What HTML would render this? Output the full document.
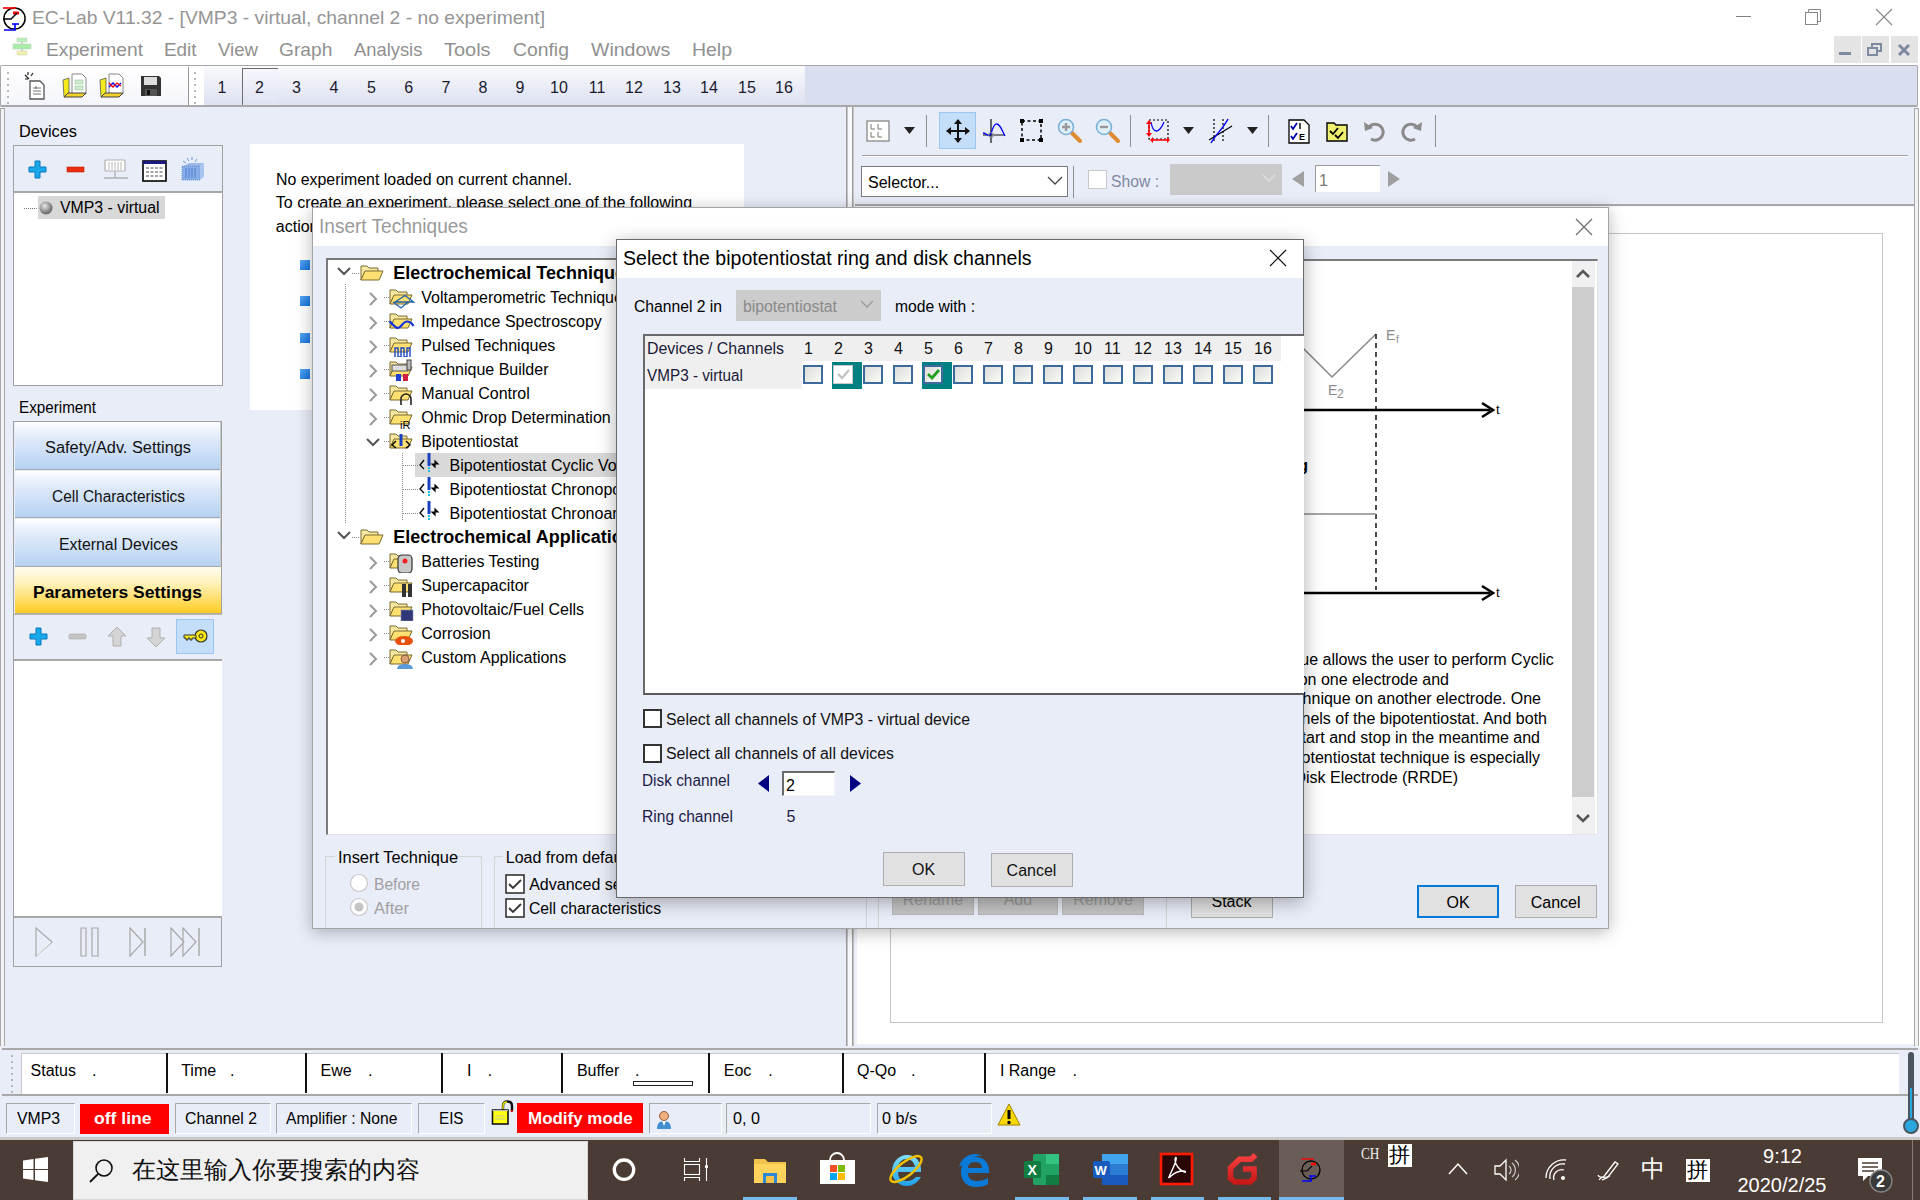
<!DOCTYPE html><html><head><meta charset="utf-8"><style>
html,body{margin:0;padding:0;}
body{width:1920px;height:1200px;overflow:hidden;position:relative;background:#E9EDF8;font-family:"Liberation Sans",sans-serif;}
.a{position:absolute;box-sizing:border-box;}
.t{white-space:nowrap;}
</style></head><body>
<div class="a" style="left:0px;top:0px;width:1920px;height:65px;background:#fff;"></div>
<svg class="a" style="left:1px;top:3px;" width="26" height="28" viewBox="0 0 26 28"><circle cx="13.5" cy="15.5" r="10.6" fill="none" stroke="#000" stroke-width="1.5"/><path d="M2 5h13" stroke="#f00" stroke-width="1.6"/><path d="M12 10h6" stroke="#f00" stroke-width="3"/><path d="M2 16h8l6-6" stroke="#000" stroke-width="1.4" fill="none"/><path d="M11 21h7" stroke="#00f" stroke-width="1.6"/><path d="M14 21v6M3 27h12" stroke="#00f" stroke-width="1.6"/></svg>
<div class="a t" style="left:32.00px;top:8.00px;font-size:19px;line-height:19px;color:#959595;transform:scaleX(1.0148);transform-origin:0 0;">EC-Lab V11.32 - [VMP3 - virtual, channel 2 - no experiment]</div>
<div class="a" style="left:1736px;top:16px;width:15px;height:1px;background:#808080;"></div>
<svg class="a" style="left:1803px;top:7px;" width="20" height="20" viewBox="0 0 20 20"><rect x="2.5" y="5.5" width="12" height="12" fill="none" stroke="#888" stroke-width="1"/><path d="M5.5 5.5v-3h12v12h-3" fill="none" stroke="#888" stroke-width="1"/></svg>
<svg class="a" style="left:1874px;top:7px;" width="20" height="20" viewBox="0 0 20 20"><path d="M2 2l16 16M18 2L2 18" stroke="#888" stroke-width="1.1"/></svg>
<svg class="a" style="left:12px;top:37px;" width="20" height="20" viewBox="0 0 20 20"><rect x="5" y="1" width="10" height="4" fill="#b7f0b7" stroke="#c8d8c8" stroke-width=".6"/><rect x="1" y="7" width="18" height="5" fill="#a8eca8" stroke="#c0d0c0" stroke-width=".6"/><rect x="5" y="14" width="10" height="4" fill="#eef0a8" stroke="#d8d8c0" stroke-width=".6"/><path d="M10 5v2M10 12v2" stroke="#aaa"/></svg>
<div class="a t" style="left:45.80px;top:41.00px;font-size:18.5px;line-height:18.5px;color:#909090;transform:scaleX(1.0367);transform-origin:0 0;">Experiment</div>
<div class="a t" style="left:164.20px;top:41.00px;font-size:18.5px;line-height:18.5px;color:#909090;transform:scaleX(1.0195);transform-origin:0 0;">Edit</div>
<div class="a t" style="left:218.30px;top:41.00px;font-size:18.5px;line-height:18.5px;color:#909090;transform:scaleX(1.0059);transform-origin:0 0;">View</div>
<div class="a t" style="left:279.20px;top:41.00px;font-size:18.5px;line-height:18.5px;color:#909090;transform:scaleX(1.0366);transform-origin:0 0;">Graph</div>
<div class="a t" style="left:354.20px;top:41.00px;font-size:18.5px;line-height:18.5px;color:#909090;transform:scaleX(0.9915);transform-origin:0 0;">Analysis</div>
<div class="a t" style="left:444.20px;top:41.00px;font-size:18.5px;line-height:18.5px;color:#909090;transform:scaleX(1.0790);transform-origin:0 0;">Tools</div>
<div class="a t" style="left:513.30px;top:41.00px;font-size:18.5px;line-height:18.5px;color:#909090;transform:scaleX(1.0453);transform-origin:0 0;">Config</div>
<div class="a t" style="left:590.80px;top:41.00px;font-size:18.5px;line-height:18.5px;color:#909090;transform:scaleX(1.0553);transform-origin:0 0;">Windows</div>
<div class="a t" style="left:691.70px;top:41.00px;font-size:18.5px;line-height:18.5px;color:#909090;transform:scaleX(1.0513);transform-origin:0 0;">Help</div>
<div class="a" style="left:1834px;top:36px;width:27px;height:27px;background:#e4e4e4;"></div>
<div class="a" style="left:1862px;top:36px;width:27px;height:27px;background:#e4e4e4;"></div>
<div class="a" style="left:1891px;top:36px;width:27px;height:27px;background:#e4e4e4;"></div>
<div class="a" style="left:1839px;top:52px;width:12px;height:3px;background:#7d8aa0;"></div>
<svg class="a" style="left:1866px;top:41px;" width="20" height="20" viewBox="0 0 20 20"><rect x="2" y="7" width="9" height="7" fill="none" stroke="#7d8aa0" stroke-width="2"/><path d="M6 7V3h9v7h-4" fill="none" stroke="#7d8aa0" stroke-width="2"/></svg>
<svg class="a" style="left:1895px;top:41px;" width="20" height="20" viewBox="0 0 20 20"><path d="M4 4l10 10M14 4L4 14" stroke="#7d8aa0" stroke-width="3"/></svg>
<div class="a" style="left:0px;top:65px;width:1918px;height:42px;background:#dadff0;border-top:1px solid #a8a8a8;border-bottom:2px solid #a8a8a8;border-right:1px solid #a8a8a8;border-left:1px solid #a8a8a8;border-radius:2px;"></div>
<div class="a" style="left:1918px;top:65px;width:2px;height:1040px;background:#fff;"></div>
<div class="a" style="left:1px;top:66px;width:187px;height:39px;background:linear-gradient(#fff,#f4f5fb);"></div>
<div class="a" style="left:188px;top:67px;width:1px;height:38px;background:#9a9a9a;"></div>
<div class="a" style="left:204px;top:66px;width:601px;height:39px;background:linear-gradient(#f9fafd,#dde1f1);"></div>
<div class="a" style="left:189px;top:66px;width:15px;height:39px;background:#fff;"></div>
<div class="a" style="left:194px;top:72px;width:2px;height:2px;background:#b8b8b8;"></div>
<div class="a" style="left:7px;top:72px;width:2px;height:2px;background:#b8b8b8;"></div>
<div class="a" style="left:194px;top:78px;width:2px;height:2px;background:#b8b8b8;"></div>
<div class="a" style="left:7px;top:78px;width:2px;height:2px;background:#b8b8b8;"></div>
<div class="a" style="left:194px;top:84px;width:2px;height:2px;background:#b8b8b8;"></div>
<div class="a" style="left:7px;top:84px;width:2px;height:2px;background:#b8b8b8;"></div>
<div class="a" style="left:194px;top:90px;width:2px;height:2px;background:#b8b8b8;"></div>
<div class="a" style="left:7px;top:90px;width:2px;height:2px;background:#b8b8b8;"></div>
<div class="a" style="left:194px;top:96px;width:2px;height:2px;background:#b8b8b8;"></div>
<div class="a" style="left:7px;top:96px;width:2px;height:2px;background:#b8b8b8;"></div>
<div class="a" style="left:194px;top:102px;width:2px;height:2px;background:#b8b8b8;"></div>
<div class="a" style="left:7px;top:102px;width:2px;height:2px;background:#b8b8b8;"></div>
<div class="a" style="left:242px;top:68px;width:36px;height:37px;border-top:1px solid #6d6d6d;border-left:1px solid #6d6d6d;background:linear-gradient(#f6f7fc,#dfe3f2);"></div>
<div class="a t" style="left:217.55px;top:80.00px;font-size:16px;line-height:16px;color:#1a1a2e;">1</div>
<div class="a t" style="left:254.95px;top:80.00px;font-size:16px;line-height:16px;color:#1a1a2e;">2</div>
<div class="a t" style="left:292.05px;top:80.00px;font-size:16px;line-height:16px;color:#1a1a2e;">3</div>
<div class="a t" style="left:329.55px;top:80.00px;font-size:16px;line-height:16px;color:#1a1a2e;">4</div>
<div class="a t" style="left:367.05px;top:80.00px;font-size:16px;line-height:16px;color:#1a1a2e;">5</div>
<div class="a t" style="left:404.15px;top:80.00px;font-size:16px;line-height:16px;color:#1a1a2e;">6</div>
<div class="a t" style="left:441.55px;top:80.00px;font-size:16px;line-height:16px;color:#1a1a2e;">7</div>
<div class="a t" style="left:478.55px;top:80.00px;font-size:16px;line-height:16px;color:#1a1a2e;">8</div>
<div class="a t" style="left:515.55px;top:80.00px;font-size:16px;line-height:16px;color:#1a1a2e;">9</div>
<div class="a t" style="left:550.10px;top:80.00px;font-size:16px;line-height:16px;color:#1a1a2e;">10</div>
<div class="a t" style="left:588.70px;top:80.00px;font-size:16px;line-height:16px;color:#1a1a2e;">11</div>
<div class="a t" style="left:625.10px;top:80.00px;font-size:16px;line-height:16px;color:#1a1a2e;">12</div>
<div class="a t" style="left:663.10px;top:80.00px;font-size:16px;line-height:16px;color:#1a1a2e;">13</div>
<div class="a t" style="left:700.10px;top:80.00px;font-size:16px;line-height:16px;color:#1a1a2e;">14</div>
<div class="a t" style="left:738.10px;top:80.00px;font-size:16px;line-height:16px;color:#1a1a2e;">15</div>
<div class="a t" style="left:775.10px;top:80.00px;font-size:16px;line-height:16px;color:#1a1a2e;">16</div>
<svg class="a" style="left:24px;top:72px;" width="24" height="28" viewBox="0 0 24 28"><path d="M6 9h10l4 4v14H6z" fill="#fff" stroke="#555" stroke-width="1.3"/><path d="M9 16h8M9 19h8M9 22h8M12 14v3" stroke="#777" stroke-width="1.2"/><path d="M1 3l4 4M4 0v3M9 1l-2 3M1 7h3" stroke="#222" stroke-width="1.2"/></svg>
<svg class="a" style="left:62px;top:72px;" width="26" height="28" viewBox="0 0 26 28"><path d="M10 2h10l4 4v16H10z" fill="#fff" stroke="#888" stroke-width="1"/><rect x="13" y="8" width="8" height="4" fill="#cfe8cf" stroke="#9c9" stroke-width=".6"/><rect x="13" y="14" width="8" height="4" fill="#cfe8cf" stroke="#9c9" stroke-width=".6"/><path d="M1 8l6-2v16l-5 3z" fill="#f5ea1c" stroke="#555" stroke-width=".8"/><path d="M2 25l4-4h18l-4 4z" fill="#f0d22a" stroke="#444" stroke-width="1"/></svg>
<svg class="a" style="left:99px;top:72px;" width="26" height="28" viewBox="0 0 26 28"><path d="M10 2h10l4 4v16H10z" fill="#fff" stroke="#888" stroke-width="1"/><path d="M10 15l4-4 4 4 4-4" fill="none" stroke="#00f" stroke-width="1.3"/><path d="M10 11l4 4 4-4 4 3" fill="none" stroke="#f00" stroke-width="1.3"/><path d="M1 8l6-2v16l-5 3z" fill="#f5ea1c" stroke="#555" stroke-width=".8"/><path d="M2 25l4-4h18l-4 4z" fill="#f0d22a" stroke="#444" stroke-width="1"/></svg>
<svg class="a" style="left:139px;top:74px;" width="24" height="24" viewBox="0 0 24 24"><path d="M2 2h18l2 2v18H2z" fill="#333"/><rect x="5" y="3" width="13" height="8" fill="#ddd"/><rect x="6" y="15" width="12" height="7" fill="#555"/><rect x="8" y="16" width="3" height="5" fill="#111"/></svg>
<div class="a" style="left:0px;top:108px;width:5px;height:938px;background:#f2f2f2;border-left:1px solid #a8a8a8;border-right:1px solid #a8a8a8;border-top:1px solid #a8a8a8;"></div>
<div class="a" style="left:1914px;top:108px;width:5px;height:938px;background:#f2f2f2;border-left:1px solid #a8a8a8;border-right:1px solid #a8a8a8;border-top:1px solid #a8a8a8;"></div>
<div class="a" style="left:846px;top:107px;width:2px;height:939px;background:#9c9c9c;border-right:1px solid #c4c4c4;"></div>
<div class="a" style="left:848px;top:107px;width:4px;height:939px;background:#f8f9fd;"></div>
<div class="a" style="left:852px;top:107px;width:2px;height:939px;background:#9c9c9c;border-right:1px solid #c4c4c4;"></div>
<div class="a t" style="left:19.00px;top:124.00px;font-size:16px;line-height:16px;color:#000;transform:scaleX(1.0192);transform-origin:0 0;">Devices</div>
<div class="a" style="left:13px;top:145px;width:210px;height:241px;border:1px solid #a0a0a0;background:#e9edf8;"></div>
<div class="a" style="left:14px;top:191px;width:208px;height:2px;background:#a8a8a8;"></div>
<div class="a" style="left:14px;top:193px;width:208px;height:192px;background:#fff;"></div>
<svg class="a" style="left:28px;top:160px;" width="20" height="20" viewBox="0 0 20 20"><path d="M7 1h5v6h6v5h-6v6H7v-6H1V7h6z" fill="#19a8e8" stroke="#0a78c0" stroke-width="1"/></svg>
<svg class="a" style="left:66px;top:160px;" width="20" height="20" viewBox="0 0 20 20"><rect x="1" y="7" width="17" height="5" fill="#e83010" stroke="#c02000" stroke-width=".6"/></svg>
<svg class="a" style="left:103px;top:159px;" width="25" height="24" viewBox="0 0 25 24"><rect x="2" y="1" width="20" height="11" rx="1" fill="#fff" stroke="#b0b0b0" stroke-width="1.2"/><path d="M6 3v8M9 3v8M12 3v8M15 3v8M18 3v8" stroke="#b8b8b8"/><path d="M12 12v7M1 19h24" stroke="#b0b0b0" stroke-width="1.3"/></svg>
<svg class="a" style="left:142px;top:160px;" width="25" height="22" viewBox="0 0 25 22"><rect x="1" y="1" width="23" height="20" fill="#fff" stroke="#000" stroke-width="1.6"/><rect x="1" y="1" width="23" height="3" fill="#1a1a80"/><path d="M4 8h17M4 12h17M4 16h17" stroke="#888" stroke-width="1.4" stroke-dasharray="3 1.5"/></svg>
<svg class="a" style="left:180px;top:157px;" width="26" height="26" viewBox="0 0 26 26"><path d="M4 9l5-3h15l-4 3z" fill="#9ab8e8"/><rect x="2" y="9" width="18" height="14" fill="#88aee8" stroke="#6a90d0" stroke-width="1" stroke-dasharray="1 1"/><path d="M20 9l4-3v14l-4 3z" fill="#a8c4f0"/><path d="M6 11v10M9 11v10M12 11v10M15 11v10" stroke="#5080d0" stroke-width="1"/><path d="M7 1l2 3M12 0v3M3 4l3 2M17 2l-2 3" stroke="#6a9ae0" stroke-width="1"/></svg>
<div class="a" style="left:24px;top:208px;width:1px;height:1px;background:#777;"></div>
<div class="a" style="left:26px;top:208px;width:1px;height:1px;background:#777;"></div>
<div class="a" style="left:28px;top:208px;width:1px;height:1px;background:#777;"></div>
<div class="a" style="left:30px;top:208px;width:1px;height:1px;background:#777;"></div>
<div class="a" style="left:32px;top:208px;width:1px;height:1px;background:#777;"></div>
<div class="a" style="left:34px;top:208px;width:1px;height:1px;background:#777;"></div>
<div class="a" style="left:36px;top:208px;width:1px;height:1px;background:#777;"></div>
<div class="a" style="left:38px;top:196px;width:127px;height:23px;background:#d8d8d8;"></div>
<svg class="a" style="left:38px;top:200px;" width="16" height="16" viewBox="0 0 16 16"><defs><radialGradient id="gb" cx="40%" cy="35%" r="60%"><stop offset="0" stop-color="#e8e8e8"/><stop offset="1" stop-color="#6a6a6a"/></radialGradient></defs><circle cx="8" cy="8" r="6.5" fill="url(#gb)"/></svg>
<div class="a t" style="left:60.30px;top:200.00px;font-size:16px;line-height:16px;color:#000;transform:scaleX(0.9904);transform-origin:0 0;">VMP3 - virtual</div>
<div class="a t" style="left:19.00px;top:400.00px;font-size:16px;line-height:16px;color:#000;transform:scaleX(0.9515);transform-origin:0 0;">Experiment</div>
<div class="a" style="left:13px;top:421px;width:209px;height:546px;border:1px solid #a0a0a0;background:#e9edf8;"></div>
<div class="a" style="left:15px;top:422px;width:206px;height:48px;background:linear-gradient(#fdfeff 0%,#dfeafa 35%,#b6d2f2 100%);border-bottom:1px solid #a8a8a8;border-right:1px solid #c8c8c8;"></div>
<div class="a t" style="left:45.00px;top:440.00px;font-size:16px;line-height:16px;color:#111;transform:scaleX(1.0218);transform-origin:0 0;">Safety/Adv. Settings</div>
<div class="a" style="left:15px;top:471px;width:206px;height:47px;background:linear-gradient(#fdfeff 0%,#dfeafa 35%,#b6d2f2 100%);border-bottom:1px solid #a8a8a8;border-right:1px solid #c8c8c8;"></div>
<div class="a t" style="left:51.50px;top:489.00px;font-size:16px;line-height:16px;color:#111;transform:scaleX(0.9651);transform-origin:0 0;">Cell Characteristics</div>
<div class="a" style="left:15px;top:519px;width:206px;height:48px;background:linear-gradient(#fdfeff 0%,#dfeafa 35%,#b6d2f2 100%);border-bottom:1px solid #a8a8a8;border-right:1px solid #c8c8c8;"></div>
<div class="a t" style="left:58.50px;top:537.00px;font-size:16px;line-height:16px;color:#111;transform:scaleX(0.9913);transform-origin:0 0;">External Devices</div>
<div class="a" style="left:15px;top:567px;width:206px;height:47px;background:linear-gradient(#fffdf0 0%,#ffefb0 40%,#ffcc22 100%);border-bottom:1px solid #a8a8a8;"></div>
<div class="a t" style="left:32.50px;top:585.00px;font-size:16px;line-height:16px;color:#000;font-weight:bold;transform:scaleX(1.0922);transform-origin:0 0;">Parameters Settings</div>
<div class="a" style="left:14px;top:614px;width:208px;height:46px;background:#e9edf8;border-top:1px solid #b8b8b8;"></div>
<div class="a" style="left:14px;top:659px;width:208px;height:2px;background:#a8a8a8;"></div>
<div class="a" style="left:14px;top:661px;width:208px;height:255px;background:#fff;"></div>
<div class="a" style="left:14px;top:916px;width:208px;height:2px;background:#a8a8a8;"></div>
<svg class="a" style="left:29px;top:627px;" width="20" height="20" viewBox="0 0 20 20"><path d="M7 1h5v6h6v5h-6v6H7v-6H1V7h6z" fill="#19a8e8" stroke="#0a78c0" stroke-width="1"/></svg>
<svg class="a" style="left:68px;top:630px;" width="20" height="14" viewBox="0 0 20 14"><rect x="1" y="4" width="17" height="5" rx="1.5" fill="#c4c4c4" stroke="#a8a8a8" stroke-width=".6"/></svg>
<svg class="a" style="left:106px;top:626px;" width="22" height="22" viewBox="0 0 22 22"><path d="M11 1l9 9h-5v10H7V10H2z" fill="#d4d4d4" stroke="#b0b0b0" stroke-width="1"/></svg>
<svg class="a" style="left:145px;top:626px;" width="22" height="22" viewBox="0 0 22 22"><path d="M11 21l9-9h-5V2H7v10H2z" fill="#d4d4d4" stroke="#b0b0b0" stroke-width="1"/></svg>
<div class="a" style="left:176px;top:619px;width:38px;height:35px;background:#c4ddf8;border:1px solid #9cc6f2;"></div>
<svg class="a" style="left:183px;top:628px;" width="26" height="16" viewBox="0 0 26 16"><circle cx="18" cy="8" r="6" fill="#f8e818" stroke="#333" stroke-width="1.2"/><circle cx="18" cy="8" r="2" fill="none" stroke="#333" stroke-width="1"/><path d="M1 7h12v3H9v2H7v-2H5v2H3v-2H1z" fill="#f8e818" stroke="#333" stroke-width="1"/></svg>
<svg class="a" style="left:34px;top:926px;" width="22" height="32" viewBox="0 0 22 32"><path d="M2 2l16 14L2 30z" fill="none" stroke="#a8a8a8" stroke-width="1.2"/><path d="M3 29l14-13" stroke="#fff"/></svg>
<svg class="a" style="left:78px;top:926px;" width="26" height="32" viewBox="0 0 26 32"><path d="M3 2h5v28H3zM14 2h6v28h-6z" fill="none" stroke="#a8a8a8" stroke-width="1.2"/></svg>
<svg class="a" style="left:128px;top:926px;" width="24" height="32" viewBox="0 0 24 32"><path d="M2 2l13 14L2 30z" fill="none" stroke="#a8a8a8" stroke-width="1.2"/><path d="M17 2v28" stroke="#a8a8a8" stroke-width="1.5"/></svg>
<svg class="a" style="left:169px;top:926px;" width="36" height="32" viewBox="0 0 36 32"><path d="M2 2l13 14L2 30zM14 2l13 14-13 14z" fill="none" stroke="#a8a8a8" stroke-width="1.2"/><path d="M30 2v28" stroke="#a8a8a8" stroke-width="1.5"/></svg>
<div class="a" style="left:250px;top:144px;width:494px;height:266px;background:#fff;"></div>
<div class="a t" style="left:275.80px;top:172.00px;font-size:16px;line-height:16px;color:#000;transform:scaleX(0.9934);transform-origin:0 0;">No experiment loaded on current channel.</div>
<div class="a t" style="left:275.80px;top:195.00px;font-size:16px;line-height:16px;color:#000;">To create an experiment, please select one of the following</div>
<div class="a t" style="left:275.80px;top:219.00px;font-size:16px;line-height:16px;color:#000;">actions:</div>
<div class="a" style="left:300px;top:260px;width:10px;height:10px;background:linear-gradient(135deg,#5aa8f8,#1070d8);"></div>
<div class="a" style="left:300px;top:296px;width:10px;height:10px;background:linear-gradient(135deg,#5aa8f8,#1070d8);"></div>
<div class="a" style="left:300px;top:333px;width:10px;height:10px;background:linear-gradient(135deg,#5aa8f8,#1070d8);"></div>
<div class="a" style="left:300px;top:369px;width:10px;height:10px;background:linear-gradient(135deg,#5aa8f8,#1070d8);"></div>
<div class="a" style="left:855px;top:107px;width:1059px;height:99px;background:#e9edf8;"></div>
<div class="a" style="left:862px;top:155px;width:1046px;height:1px;background:#a0a0a0;"></div>
<div class="a" style="left:862px;top:156px;width:1046px;height:1px;background:#fff;"></div>
<div class="a" style="left:855px;top:204px;width:1059px;height:2px;background:#a8a8a8;"></div>
<div class="a" style="left:855px;top:206px;width:1059px;height:1px;background:#f4f6fc;"></div>
<svg class="a" style="left:866px;top:120px;" width="24" height="22" viewBox="0 0 24 22"><rect x="1" y="1" width="22" height="20" fill="#fff" stroke="#888" stroke-width="1.3"/><path d="M5 4v5h4M12 4v5h4M5 12v5h4M12 12v5h4" fill="none" stroke="#777" stroke-width="1"/></svg>
<svg class="a" style="left:904px;top:127px;" width="12" height="8" viewBox="0 0 12 8"><path d="M0 0h11L5.5 7z" fill="#222"/></svg>
<svg class="a" style="left:1183px;top:127px;" width="12" height="8" viewBox="0 0 12 8"><path d="M0 0h11L5.5 7z" fill="#222"/></svg>
<svg class="a" style="left:1247px;top:127px;" width="12" height="8" viewBox="0 0 12 8"><path d="M0 0h11L5.5 7z" fill="#222"/></svg>
<div class="a" style="left:926px;top:115px;width:1px;height:32px;background:#909090;"></div>
<div class="a" style="left:1130px;top:115px;width:1px;height:32px;background:#909090;"></div>
<div class="a" style="left:1268px;top:115px;width:1px;height:32px;background:#909090;"></div>
<div class="a" style="left:1435px;top:115px;width:1px;height:32px;background:#909090;"></div>
<div class="a" style="left:939px;top:112px;width:37px;height:37px;background:#c4ddf8;border:1px solid #9cc6f2;"></div>
<svg class="a" style="left:946px;top:119px;" width="24" height="24" viewBox="0 0 24 24"><path d="M12 1v22M1 12h22" stroke="#111" stroke-width="2"/><path d="M12 0l-4 5h8zM12 24l-4-5h8zM0 12l5-4v8zM24 12l-5-4v8z" fill="#111"/></svg>
<svg class="a" style="left:982px;top:118px;" width="26" height="26" viewBox="0 0 26 26"><path d="M9 1v24M1 17h22" stroke="#111" stroke-width="1.2"/><path d="M1 15c4 0 5 4 7 2s3-12 7-11 6 9 8 12" fill="none" stroke="#00f" stroke-width="1.3"/><circle cx="9" cy="17" r="2.5" fill="none" stroke="#888"/></svg>
<svg class="a" style="left:1019px;top:118px;" width="26" height="26" viewBox="0 0 26 26"><rect x="3" y="3" width="19" height="19" fill="none" stroke="#000" stroke-width="1.5" stroke-dasharray="3 2.5"/><rect x="1" y="1" width="4" height="4"/><rect x="20" y="1" width="4" height="4"/><rect x="1" y="20" width="4" height="4"/><rect x="20" y="20" width="4" height="4"/></svg>
<svg class="a" style="left:1057px;top:118px;" width="26" height="26" viewBox="0 0 26 26"><line x1="14" y1="14" x2="23" y2="23" stroke="#e08a30" stroke-width="4" stroke-linecap="round"/><circle cx="9" cy="9" r="7.5" fill="#dff0fb" stroke="#7ab0d8" stroke-width="1.6"/><path d="M9 5v8M5 9h8" stroke="#999" stroke-width="2.4"/></svg>
<svg class="a" style="left:1095px;top:118px;" width="26" height="26" viewBox="0 0 26 26"><line x1="14" y1="14" x2="23" y2="23" stroke="#e08a30" stroke-width="4" stroke-linecap="round"/><circle cx="9" cy="9" r="7.5" fill="#dff0fb" stroke="#7ab0d8" stroke-width="1.6"/><path d="M5 9h8" stroke="#999" stroke-width="2.4"/></svg>
<svg class="a" style="left:1145px;top:118px;" width="26" height="26" viewBox="0 0 26 26"><rect x="4" y="2" width="19" height="19" fill="none" stroke="#000" stroke-width="1.2" stroke-dasharray="2 2"/><path d="M6 4c2 12 8 12 13 0" fill="none" stroke="#00f" stroke-width="1.3"/><path d="M4 3v15M8 22h14" stroke="#f00" stroke-width="1.6"/><path d="M1 6l3-4 3 4zM1 15l3 4 3-4zM8 19l-3 3 3 3zM22 19l3 3-3 3z" fill="#f00"/></svg>
<svg class="a" style="left:1208px;top:118px;" width="26" height="26" viewBox="0 0 26 26"><path d="M6 1v24M15 1v24" stroke="#000" stroke-width="1.2" stroke-dasharray="2 2"/><path d="M1 22L24 8" stroke="#000" stroke-width="1.2"/><path d="M3 25C8 16 14 12 20 1" fill="none" stroke="#00f" stroke-width="1.5"/></svg>
<svg class="a" style="left:1288px;top:119px;" width="24" height="25" viewBox="0 0 24 25"><path d="M1 1h15l5 5v18H1z" fill="#fff" stroke="#000" stroke-width="1.3"/><path d="M3 7l2 3 4-6M3 17l2 3 4-6" fill="none" stroke="#00a" stroke-width="1.8"/><path d="M12 4v6" stroke="#000" stroke-width="1.4"/><text x="11" y="21" font-family="Liberation Sans" font-size="9" font-weight="bold">E</text></svg>
<svg class="a" style="left:1326px;top:120px;" width="22" height="22" viewBox="0 0 22 22"><path d="M1 3h7l2 2h11v16H1z" fill="#f0f070" stroke="#000" stroke-width="1.4"/><path d="M4 11l3 3 5-6M9 15l3 3 5-6" fill="none" stroke="#000" stroke-width="1.8"/></svg>
<svg class="a" style="left:1363px;top:120px;" width="22" height="22" viewBox="0 0 22 22"><path d="M6 7a8 8 0 1 1 2 12" fill="none" stroke="#8a8a8a" stroke-width="3"/><path d="M1 2l1 9 8-3z" fill="#8a8a8a"/></svg>
<svg class="a" style="left:1401px;top:120px;" width="22" height="22" viewBox="0 0 22 22"><path d="M16 7a8 8 0 1 0-2 12" fill="none" stroke="#8a8a8a" stroke-width="3"/><path d="M21 2l-1 9-8-3z" fill="#8a8a8a"/></svg>
<div class="a" style="left:861px;top:166px;width:207px;height:31px;background:#fff;border:1px solid #7a7a7a;"></div>
<div class="a t" style="left:868.00px;top:175.00px;font-size:16px;line-height:16px;color:#000;">Selector...</div>
<svg class="a" style="left:1046px;top:175px;" width="20" height="12" viewBox="0 0 20 12"><path d="M2 2l7 7 7-7" fill="none" stroke="#444" stroke-width="1.3"/></svg>
<div class="a" style="left:1073px;top:166px;width:1px;height:32px;background:#909090;"></div>
<div class="a" style="left:1088px;top:170px;width:19px;height:19px;background:#fff;border:1px solid #c8c8c8;"></div>
<div class="a t" style="left:1110.80px;top:174.00px;font-size:16px;line-height:16px;color:#8088a0;transform:scaleX(0.9813);transform-origin:0 0;">Show :</div>
<div class="a" style="left:1170px;top:164px;width:112px;height:31px;background:#cacaca;"></div>
<svg class="a" style="left:1262px;top:174px;" width="16" height="10" viewBox="0 0 16 10"><path d="M1 1l6 6 6-6" fill="none" stroke="#e0e0e0" stroke-width="1.3"/></svg>
<svg class="a" style="left:1292px;top:171px;" width="13" height="17" viewBox="0 0 13 17"><path d="M12 0v16L0 8z" fill="#a0a0a0"/></svg>
<div class="a" style="left:1315px;top:165px;width:65px;height:27px;background:#fff;border-top:1px solid #9a9a9a;border-left:1px solid #9a9a9a;"></div>
<div class="a t" style="left:1319.00px;top:173.00px;font-size:16px;line-height:16px;color:#777;">1</div>
<svg class="a" style="left:1388px;top:171px;" width="13" height="17" viewBox="0 0 13 17"><path d="M0 0v16L12 8z" fill="#a0a0a0"/></svg>
<div class="a" style="left:855px;top:207px;width:1059px;height:838px;background:#fff;border-left:2px solid #eef0fa;border-bottom:1px solid #eef0fa;"></div>
<div class="a" style="left:890px;top:233px;width:993px;height:790px;border:1px solid #c4c4c4;"></div>
<div class="a" style="left:0px;top:1047px;width:1920px;height:93px;background:#e9edf8;"></div>
<div class="a" style="left:2px;top:1048px;width:1916px;height:48px;border-top:2px solid #a8a8a8;border-bottom:2px solid #a8a8a8;background:#e9edf8;"></div>
<div class="a" style="left:11px;top:1055px;width:2px;height:2px;background:#b8b8b8;"></div>
<div class="a" style="left:11px;top:1061px;width:2px;height:2px;background:#b8b8b8;"></div>
<div class="a" style="left:11px;top:1067px;width:2px;height:2px;background:#b8b8b8;"></div>
<div class="a" style="left:11px;top:1073px;width:2px;height:2px;background:#b8b8b8;"></div>
<div class="a" style="left:11px;top:1079px;width:2px;height:2px;background:#b8b8b8;"></div>
<div class="a" style="left:11px;top:1085px;width:2px;height:2px;background:#b8b8b8;"></div>
<div class="a" style="left:11px;top:1091px;width:2px;height:2px;background:#b8b8b8;"></div>
<div class="a" style="left:21px;top:1053px;width:1878px;height:41px;background:#fff;border-top:1px solid #c8c8c8;border-left:1px solid #c8c8c8;"></div>
<div class="a" style="left:165.5px;top:1053px;width:2px;height:40px;background:#111;"></div>
<div class="a" style="left:305px;top:1053px;width:2px;height:40px;background:#111;"></div>
<div class="a" style="left:441px;top:1053px;width:2px;height:40px;background:#111;"></div>
<div class="a" style="left:561px;top:1053px;width:2px;height:40px;background:#111;"></div>
<div class="a" style="left:708px;top:1053px;width:2px;height:40px;background:#111;"></div>
<div class="a" style="left:842px;top:1053px;width:2px;height:40px;background:#111;"></div>
<div class="a" style="left:984px;top:1053px;width:2px;height:40px;background:#111;"></div>
<div class="a t" style="left:30.60px;top:1063.00px;font-size:16px;line-height:16px;color:#000;">Status</div>
<div class="a t" style="left:92.00px;top:1063.00px;font-size:16px;line-height:16px;color:#000;">.</div>
<div class="a t" style="left:181.20px;top:1063.00px;font-size:16px;line-height:16px;color:#000;">Time</div>
<div class="a t" style="left:230.00px;top:1063.00px;font-size:16px;line-height:16px;color:#000;">.</div>
<div class="a t" style="left:320.60px;top:1063.00px;font-size:16px;line-height:16px;color:#000;">Ewe</div>
<div class="a t" style="left:368.00px;top:1063.00px;font-size:16px;line-height:16px;color:#000;">.</div>
<div class="a t" style="left:467.00px;top:1063.00px;font-size:16px;line-height:16px;color:#000;">I</div>
<div class="a t" style="left:487.80px;top:1063.00px;font-size:16px;line-height:16px;color:#000;">.</div>
<div class="a t" style="left:576.90px;top:1063.00px;font-size:16px;line-height:16px;color:#000;">Buffer</div>
<div class="a t" style="left:635.00px;top:1063.00px;font-size:16px;line-height:16px;color:#000;">.</div>
<div class="a t" style="left:723.80px;top:1063.00px;font-size:16px;line-height:16px;color:#000;">Eoc</div>
<div class="a t" style="left:768.30px;top:1063.00px;font-size:16px;line-height:16px;color:#000;">.</div>
<div class="a t" style="left:857.10px;top:1063.00px;font-size:16px;line-height:16px;color:#000;">Q-Qo</div>
<div class="a t" style="left:911.00px;top:1063.00px;font-size:16px;line-height:16px;color:#000;">.</div>
<div class="a t" style="left:999.90px;top:1063.00px;font-size:16px;line-height:16px;color:#000;">I Range</div>
<div class="a t" style="left:1072.50px;top:1063.00px;font-size:16px;line-height:16px;color:#000;">.</div>
<div class="a" style="left:633px;top:1081px;width:60px;height:5px;border:1px solid #222;background:#fff;"></div>
<svg class="a" style="left:1901px;top:1050px;" width="20" height="86" viewBox="0 0 20 86"><rect x="7" y="2" width="6" height="72" rx="3" fill="#4a5560"/><rect x="9" y="38" width="2" height="36" fill="#29a8e0"/><circle cx="10" cy="76" r="7" fill="#29a8e0" stroke="#4a5560" stroke-width="2"/></svg>
<div class="a" style="left:6px;top:1102.5px;width:69px;height:31px;border-top:1px solid #a8a8a8;border-left:1px solid #a8a8a8;border-bottom:1px solid #fff;border-right:1px solid #fff;"></div>
<div class="a" style="left:80px;top:1103.5px;width:89px;height:30px;background:#f00;"></div>
<div class="a" style="left:174.5px;top:1102.5px;width:96.5px;height:31px;border-top:1px solid #a8a8a8;border-left:1px solid #a8a8a8;border-bottom:1px solid #fff;border-right:1px solid #fff;"></div>
<div class="a" style="left:276.4px;top:1102.5px;width:136.10000000000002px;height:31px;border-top:1px solid #a8a8a8;border-left:1px solid #a8a8a8;border-bottom:1px solid #fff;border-right:1px solid #fff;"></div>
<div class="a" style="left:418px;top:1102.5px;width:66.60000000000002px;height:31px;border-top:1px solid #a8a8a8;border-left:1px solid #a8a8a8;border-bottom:1px solid #fff;border-right:1px solid #fff;"></div>
<div class="a" style="left:648.5px;top:1102.5px;width:73.0px;height:31px;border-top:1px solid #a8a8a8;border-left:1px solid #a8a8a8;border-bottom:1px solid #fff;border-right:1px solid #fff;"></div>
<div class="a" style="left:726px;top:1102.5px;width:145.29999999999995px;height:31px;border-top:1px solid #a8a8a8;border-left:1px solid #a8a8a8;border-bottom:1px solid #fff;border-right:1px solid #fff;"></div>
<div class="a" style="left:876.5px;top:1102.5px;width:115.29999999999995px;height:31px;border-top:1px solid #a8a8a8;border-left:1px solid #a8a8a8;border-bottom:1px solid #fff;border-right:1px solid #fff;"></div>
<div class="a" style="left:517px;top:1103px;width:126px;height:30px;background:#f00;"></div>
<div class="a t" style="left:16.90px;top:1111.00px;font-size:16px;line-height:16px;color:#000;transform:scaleX(0.9869);transform-origin:0 0;">VMP3</div>
<div class="a t" style="left:94.40px;top:1111.00px;font-size:16px;line-height:16px;color:#fff;font-weight:bold;transform:scaleX(1.0965);transform-origin:0 0;">off line</div>
<div class="a t" style="left:185.00px;top:1111.00px;font-size:16px;line-height:16px;color:#000;transform:scaleX(0.9870);transform-origin:0 0;">Channel 2</div>
<div class="a t" style="left:286.40px;top:1111.00px;font-size:16px;line-height:16px;color:#000;transform:scaleX(0.9787);transform-origin:0 0;">Amplifier : None</div>
<div class="a t" style="left:438.50px;top:1111.00px;font-size:16px;line-height:16px;color:#000;transform:scaleX(0.9500);transform-origin:0 0;">EIS</div>
<div class="a t" style="left:527.80px;top:1111.00px;font-size:16px;line-height:16px;color:#fff;font-weight:bold;transform:scaleX(1.0602);transform-origin:0 0;">Modify mode</div>
<div class="a t" style="left:732.50px;top:1111.00px;font-size:16px;line-height:16px;color:#000;transform:scaleX(1.0117);transform-origin:0 0;">0, 0</div>
<div class="a t" style="left:882.00px;top:1111.00px;font-size:16px;line-height:16px;color:#000;transform:scaleX(1.0090);transform-origin:0 0;">0 b/s</div>
<svg class="a" style="left:491px;top:1100px;" width="24" height="26" viewBox="0 0 24 26"><path d="M12 10V6Q12 1.5 16.5 1.5T21 6V11" fill="none" stroke="#111" stroke-width="2.4"/><path d="M12 9V6Q12 2 16 2" fill="none" stroke="#f0f000" stroke-width="1.4"/><rect x="19.8" y="10" width="2" height="2" fill="#d00"/><rect x="1.5" y="10" width="15.5" height="14" fill="#ffff10" stroke="#111" stroke-width="1.6"/><path d="M1.5 10.5h15.5" stroke="#bbb" stroke-width="1.2"/><path d="M4 16h10M4 19h10" stroke="#c8c8a0" stroke-width="1.2"/></svg>
<svg class="a" style="left:656px;top:1110px;" width="18" height="20" viewBox="0 0 18 20"><circle cx="8" cy="6" r="4.5" fill="#f0b080" stroke="#804020" stroke-width=".8"/><path d="M1 19c0-6 3-8 7-8s7 2 7 8z" fill="#4090d0"/><path d="M6 11l2 5 2-5" fill="#fff"/></svg>
<svg class="a" style="left:997px;top:1103px;" width="24" height="24" viewBox="0 0 24 24"><path d="M12 1l11 21H1z" fill="#f8d800" stroke="#a08000" stroke-width="1"/><path d="M12 7v9" stroke="#000" stroke-width="3"/><circle cx="12" cy="19.5" r="1.7"/></svg>
<div class="a" style="left:0px;top:1137px;width:1920px;height:3px;background:#c8c8c8;"></div>
<div class="a" style="left:0px;top:1140px;width:1920px;height:60px;background:#4b3b35;"></div>
<svg class="a" style="left:23px;top:1157px;" width="26" height="25" viewBox="0 0 26 25"><path d="M0 3.5l10.5-1.5v10H0zM12 1.8L25 0v12H12zM0 13h10.5v10L0 21.5zM12 13h13v12l-13-1.8z" fill="#fff"/></svg>
<div class="a" style="left:73px;top:1141px;width:515px;height:59px;background:#f0f0f0;border:1px solid #d8d8d8;"></div>
<svg class="a" style="left:88px;top:1158px;" width="27" height="26" viewBox="0 0 27 26"><circle cx="16" cy="10" r="8" fill="none" stroke="#111" stroke-width="1.6"/><path d="M10 16L2 24" stroke="#111" stroke-width="1.8"/></svg>
<div class="a t" style="left:132px;top:1156px;font-size:24px;line-height:28px;color:#111;">在这里输入你要搜索的内容</div>
<svg class="a" style="left:611px;top:1157px;" width="26" height="26" viewBox="0 0 26 26"><circle cx="13" cy="12.7" r="9.7" fill="none" stroke="#fff" stroke-width="3.3"/></svg>
<svg class="a" style="left:680px;top:1154px;" width="32" height="32" viewBox="0 0 32 32"><path d="M4.5 4v3.5h15V4M4.5 27v-3.5h15V27" fill="none" stroke="#fff" stroke-width="1.1"/><rect x="4.5" y="10.5" width="15" height="10" fill="none" stroke="#fff" stroke-width="1.1"/><path d="M26.5 4v23" stroke="#fff" stroke-width="1.1"/><rect x="25" y="11.3" width="3" height="2.6" fill="#fff"/></svg>
<svg class="a" style="left:753px;top:1155px;" width="34" height="30" viewBox="0 0 34 30"><path d="M1 4h11l3 3h18v21H1z" fill="#f3c24a"/><path d="M1 9h32v19H1z" fill="#ffd35c"/><path d="M10 18h14v10H10z" fill="#2b88d8"/><path d="M13 21h8v7h-8z" fill="#f3c24a"/></svg>
<svg class="a" style="left:819px;top:1152px;" width="37" height="33" viewBox="0 0 37 33"><path d="M11 8a7 7 0 0 1 14 0" fill="none" stroke="#fff" stroke-width="1.8"/><rect x="1" y="8" width="35" height="24" fill="#fff"/><rect x="11" y="13" width="7" height="7" fill="#f25022"/><rect x="19" y="13" width="7" height="7" fill="#7fba00"/><rect x="11" y="21" width="7" height="7" fill="#00a4ef"/><rect x="19" y="21" width="7" height="7" fill="#ffb900"/></svg>
<svg class="a" style="left:886px;top:1151px;" width="38" height="36" viewBox="0 0 38 36"><defs><linearGradient id="ieg" x1="0" y1="0" x2="0" y2="1"><stop offset="0" stop-color="#7fe0ff"/><stop offset="1" stop-color="#1ea0e8"/></linearGradient></defs><path fill="url(#ieg)" fill-rule="evenodd" d="M35 21H12c0 6 3 9 9 9 4 0 7-2 9-4h5c-3 5-8 9-14 9C12 35 6 28 6 20S12 4 21 4s14 7 14 15zM12 16h17c-1-5-4-8-8.5-8S13 11 12 16z"/><ellipse cx="20" cy="18" rx="19" ry="7" transform="rotate(-38 20 18)" fill="none" stroke="#f0c000" stroke-width="2.4"/></svg>
<svg class="a" style="left:958px;top:1153px;" width="33" height="34" viewBox="0 0 33 34"><path fill="#0a7bd8" fill-rule="evenodd" d="M31 20H10c0 6 4 8 9 8 4 0 8-1 11-3v6c-3 2-7 3-12 3C9 34 3 28 3 19 3 10 9 4 17 4c9 0 14 6 14 13zM10 15h14c0-4-3-6-7-6s-7 2-7 6z"/><path fill="#0a7bd8" d="M1 14C3 6 10 1 17 1c3 0 6 1 8 2-6-1-12 2-15 6-3 1-6 3-9 5z"/></svg>
<svg class="a" style="left:1023px;top:1153px;" width="37" height="33" viewBox="0 0 37 33"><rect x="10" y="1" width="26" height="31" rx="2" fill="#21a366"/><rect x="23" y="1" width="13" height="10" fill="#33c481"/><rect x="23" y="22" width="13" height="10" fill="#107c41"/><rect x="1" y="8" width="17" height="17" rx="1.5" fill="#107c41"/><text x="4.5" y="22" font-family="Liberation Sans" font-size="14" font-weight="bold" fill="#fff">X</text></svg>
<svg class="a" style="left:1092px;top:1153px;" width="37" height="33" viewBox="0 0 37 33"><rect x="10" y="1" width="26" height="31" rx="2" fill="#2b7cd3"/><rect x="10" y="1" width="26" height="10" fill="#41a5ee"/><rect x="10" y="22" width="26" height="10" fill="#185abd"/><rect x="1" y="8" width="17" height="17" rx="1.5" fill="#185abd"/><text x="2.5" y="22" font-family="Liberation Sans" font-size="13" font-weight="bold" fill="#fff">W</text></svg>
<svg class="a" style="left:1227px;top:1152px;" width="32" height="35" viewBox="0 0 32 35"><defs><linearGradient id="gg" x1="0" y1="0" x2="0" y2="1"><stop offset="0" stop-color="#f84040"/><stop offset="1" stop-color="#c81818"/></linearGradient></defs><path d="M28.5 3L24 7.3H12.5L3.5 16v10.5l4.5 3.5H23l4-4v-9H16" fill="none" stroke="url(#gg)" stroke-width="5.6" stroke-linejoin="miter"/></svg>
<svg class="a" style="left:1159px;top:1152px;" width="36" height="34" viewBox="0 0 36 34"><rect x="2" y="2" width="31" height="30" fill="#2a0606" stroke="#ff1a00" stroke-width="2.6"/><path d="M10 25c2-5 6-12 7-17 1-3-1-4-1 0 0 4 4 10 9 12 2 1 2-1 0-1-5 0-10 2-13 5-2 2-3 2-2 1z" fill="none" stroke="#fff" stroke-width="1.3"/></svg>
<div class="a" style="left:1279px;top:1140px;width:65px;height:60px;background:#6a5d57;"></div>
<svg class="a" style="left:1296px;top:1155px;" width="30" height="30" viewBox="0 0 30 30"><circle cx="15" cy="15" r="9" fill="none" stroke="#000" stroke-width="1.3"/><path d="M5 4h13" stroke="#f00" stroke-width="1.3"/><path d="M15 9h5" stroke="#f00" stroke-width="2.5"/><path d="M4 16h7l5-5" stroke="#000" stroke-width="1.2" fill="none"/><path d="M13 21h7M15 21v5M6 26h10" stroke="#00f" stroke-width="1.3"/></svg>
<div class="a" style="left:743px;top:1197px;width:54px;height:3px;background:#76b9ed;"></div>
<div class="a" style="left:1015px;top:1197px;width:54px;height:3px;background:#76b9ed;"></div>
<div class="a" style="left:1083px;top:1197px;width:54px;height:3px;background:#76b9ed;"></div>
<div class="a" style="left:1151px;top:1197px;width:53px;height:3px;background:#76b9ed;"></div>
<div class="a" style="left:1218px;top:1197px;width:53px;height:3px;background:#76b9ed;"></div>
<div class="a" style="left:1279px;top:1197px;width:65px;height:3px;background:#76b9ed;"></div>
<div class="a t" style="left:1361px;top:1145px;font-family:'Liberation Serif',serif;font-size:17px;line-height:17px;color:#eee;transform:scaleX(0.78);transform-origin:0 0;">CH</div>
<div class="a" style="left:1388px;top:1144px;width:24px;height:23px;background:#fff;"></div>
<div class="a t" style="left:1389px;top:1143px;font-size:21px;line-height:24px;color:#000;">拼</div>
<svg class="a" style="left:1448px;top:1162px;" width="20" height="13" viewBox="0 0 20 13"><path d="M1 12l9-10 9 10" fill="none" stroke="#fff" stroke-width="1.5"/></svg>
<svg class="a" style="left:1493px;top:1158px;" width="26" height="24" viewBox="0 0 26 24"><path d="M2 8h5l6-6v20l-6-6H2z" fill="none" stroke="#fff" stroke-width="1.3"/><path d="M16 8a5 5 0 0 1 0 8M19 5a9 9 0 0 1 0 14M22 2a13 13 0 0 1 0 20" fill="none" stroke="#ccc" stroke-width="1.2"/></svg>
<svg class="a" style="left:1544px;top:1158px;" width="24" height="24" viewBox="0 0 24 24"><path d="M2 20a18 18 0 0 1 20-18M6 21a13 13 0 0 1 15-15M10 22a8 8 0 0 1 10-10" fill="none" stroke="#fff" stroke-width="1.3"/><circle cx="19" cy="20" r="2" fill="#fff"/></svg>
<svg class="a" style="left:1596px;top:1158px;" width="24" height="24" viewBox="0 0 24 24"><path d="M3 22c2-3 4-2 6-5l10-13 3 2-10 13c-2 2-4 2-6 3" fill="none" stroke="#fff" stroke-width="1.3"/><path d="M2 17c1 3 8 3 12 1" fill="none" stroke="#fff" stroke-width="1.2"/></svg>
<div class="a t" style="left:1641px;top:1155px;font-size:24px;line-height:28px;color:#fff;">中</div>
<div class="a" style="left:1686px;top:1159px;width:24px;height:23px;background:#fff;"></div>
<div class="a t" style="left:1687px;top:1158px;font-size:21px;line-height:24px;color:#000;">拼</div>
<div class="a t" style="left:1763.04px;top:1146.00px;font-size:20px;line-height:20px;color:#fff;">9:12</div>
<div class="a t" style="left:1737.51px;top:1175.00px;font-size:20px;line-height:20px;color:#fff;">2020/2/25</div>
<svg class="a" style="left:1856px;top:1156px;" width="42" height="40" viewBox="0 0 42 40"><path d="M2 2h24v18H12l-5 5v-5H2z" fill="#fff"/><path d="M6 7h16M6 11h16M6 15h12" stroke="#4b3b35" stroke-width="1.3"/><circle cx="25" cy="25" r="11" fill="#3a3a3a" stroke="#888" stroke-width="1.3"/><text x="20" y="31" font-family="Liberation Sans" font-size="16" font-weight="bold" fill="#fff">2</text></svg>
<div class="a" style="left:1912px;top:1140px;width:1px;height:60px;background:#8a7a74;"></div>
<div class="a" style="left:312px;top:207px;width:1297px;height:722px;background:#e9edf8;border:1px solid #a4a4a4;box-shadow:0 3px 16px rgba(0,0,0,.28);"></div>
<div class="a" style="left:313px;top:208px;width:1295px;height:38px;background:#fff;"></div>
<div class="a t" style="left:318.70px;top:217.00px;font-size:19.3px;line-height:19.3px;color:#9a9a9a;transform:scaleX(0.9873);transform-origin:0 0;">Insert Techniques</div>
<svg class="a" style="left:1574px;top:217px;" width="20" height="20" viewBox="0 0 20 20"><path d="M2 2l16 16M18 2L2 18" stroke="#6a6a6a" stroke-width="1.1"/></svg>
<div class="a" style="left:325.5px;top:258px;width:530px;height:577px;background:#fff;border-top:2px solid #7a7a7a;border-left:2px solid #7a7a7a;border-bottom:1px solid #e0e0e0;"></div>
<div class="a" style="left:860px;top:259px;width:738px;height:576px;background:#fff;border-top:2px solid #7a7a7a;border-left:2px solid #7a7a7a;border-right:1px solid #e4e4e4;border-bottom:1px solid #e4e4e4;"></div>
<div class="a" style="left:1572px;top:261px;width:23px;height:573px;background:#f0f0f0;"></div>
<div class="a" style="left:1572px;top:287px;width:22px;height:510px;background:#cdcdcd;"></div>
<svg class="a" style="left:1574px;top:266px;" width="18" height="14" viewBox="0 0 18 14"><path d="M3 11l6-6 6 6" fill="none" stroke="#555" stroke-width="2.6"/></svg>
<svg class="a" style="left:1574px;top:812px;" width="18" height="14" viewBox="0 0 18 14"><path d="M3 3l6 6 6-6" fill="none" stroke="#555" stroke-width="2.6"/></svg>
<svg class="a" style="left:1290px;top:300px;" width="240" height="320" viewBox="0 0 240 320"><path d="M0 35L42 77L86 34" fill="none" stroke="#8a8a8a" stroke-width="1.6" transform="translate(0,0)"/><path d="M86 34V290" stroke="#000" stroke-width="1.4" stroke-dasharray="5 4"/><path d="M0 110H200" stroke="#000" stroke-width="2.6"/><path d="M192 103l11 7-11 7" fill="none" stroke="#000" stroke-width="2.6"/><path d="M0 293H200" stroke="#000" stroke-width="2.6"/><path d="M192 286l11 7-11 7" fill="none" stroke="#000" stroke-width="2.6"/><path d="M0 214H86" stroke="#8a8a8a" stroke-width="1.4"/></svg>
<div class="a t" style="left:1386.00px;top:328.00px;font-size:14px;line-height:14px;color:#8a8a8a;">E</div>
<div class="a t" style="left:1396.00px;top:335.00px;font-size:10px;line-height:10px;color:#8a8a8a;">f</div>
<div class="a t" style="left:1328.00px;top:383.00px;font-size:14px;line-height:14px;color:#8a8a8a;">E</div>
<div class="a t" style="left:1337.00px;top:388.00px;font-size:12px;line-height:12px;color:#8a8a8a;">2</div>
<div class="a t" style="left:1496.00px;top:403.00px;font-size:13px;line-height:13px;color:#000;">t</div>
<div class="a t" style="left:1496.00px;top:586.00px;font-size:13px;line-height:13px;color:#000;">t</div>
<div class="a t" style="left:1233.32px;top:458.00px;font-size:16px;line-height:16px;color:#000;font-weight:bold;">Sweeping</div>
<div class="a t" style="left:1248.73px;top:652.00px;font-size:16px;line-height:16px;color:#000;">technique allows the user to perform Cyclic</div>
<div class="a t" style="left:1205.30px;top:672.00px;font-size:16px;line-height:16px;color:#000;">Voltammetry on one electrode and</div>
<div class="a t" style="left:1222.55px;top:691.00px;font-size:16px;line-height:16px;color:#000;">another technique on another electrode. One</div>
<div class="a t" style="left:1237.45px;top:711.00px;font-size:16px;line-height:16px;color:#000;">two channels of the bipotentiostat. And both</div>
<div class="a t" style="left:1293.63px;top:730.00px;font-size:16px;line-height:16px;color:#000;">start and stop in the meantime and</div>
<div class="a t" style="left:1280.28px;top:750.00px;font-size:16px;line-height:16px;color:#000;">bipotentiostat technique is especially</div>
<div class="a t" style="left:1257.06px;top:770.00px;font-size:16px;line-height:16px;color:#000;">Ring Disk Electrode (RRDE)</div>
<svg class="a" style="left:336px;top:266px;" width="16" height="10" viewBox="0 0 16 10"><path d="M2 2l6 6 6-6" fill="none" stroke="#555" stroke-width="2"/></svg>
<div class="a" style="left:352px;top:273px;width:8px;height:1px;background:repeating-linear-gradient(90deg,#888 0 1px,transparent 1px 2px);"></div>
<svg class="a" style="left:360px;top:263px;" width="26" height="22" viewBox="0 0 26 22"><path d="M1 3h6l2 2h9v4H5L1 17z" fill="#f8e8a0" stroke="#7a6a30" stroke-width="1"/><path d="M1 17l4-9h18l-4 9z" fill="#ffe070" stroke="#7a6a30" stroke-width="1"/></svg>
<div class="a t" style="left:393.30px;top:264.00px;font-size:18px;line-height:18px;color:#000;font-weight:bold;">Electrochemical Techniques</div>
<div class="a" style="left:345px;top:284px;width:1px;height:239px;background:repeating-linear-gradient(#888 0 1px,transparent 1px 2px);"></div>
<svg class="a" style="left:368px;top:291px;" width="10" height="16" viewBox="0 0 10 16"><path d="M2 2l6 6-6 6" fill="none" stroke="#999" stroke-width="2"/></svg>
<div class="a" style="left:384px;top:297px;width:5px;height:1px;background:repeating-linear-gradient(90deg,#888 0 1px,transparent 1px 2px);"></div>
<svg class="a" style="left:389px;top:287px;" width="26" height="22" viewBox="0 0 26 22"><path d="M1 3h6l2 2h9v4H5L1 17z" fill="#f8e8a0" stroke="#7a6a30" stroke-width="1"/><path d="M1 17l4-9h18l-4 9z" fill="#ffe070" stroke="#7a6a30" stroke-width="1"/><path d="M4 15L12 21L19 15M6 15L16 8.5L24.5 15Z" fill="none" stroke="#2060a8" stroke-width="1.3"/></svg>
<div class="a t" style="left:421.30px;top:290.00px;font-size:16px;line-height:16px;color:#000;">Voltamperometric Techniques</div>
<svg class="a" style="left:368px;top:315px;" width="10" height="16" viewBox="0 0 10 16"><path d="M2 2l6 6-6 6" fill="none" stroke="#999" stroke-width="2"/></svg>
<div class="a" style="left:384px;top:321px;width:5px;height:1px;background:repeating-linear-gradient(90deg,#888 0 1px,transparent 1px 2px);"></div>
<svg class="a" style="left:389px;top:311px;" width="26" height="22" viewBox="0 0 26 22"><path d="M1 3h6l2 2h9v4H5L1 17z" fill="#f8e8a0" stroke="#7a6a30" stroke-width="1"/><path d="M1 17l4-9h18l-4 9z" fill="#ffe070" stroke="#7a6a30" stroke-width="1"/><path d="M0.5 10.5C4 13 6 17 9 17S14 10 18.5 10.5S23 13 24.5 15" fill="none" stroke="#1030e0" stroke-width="2.2"/></svg>
<div class="a t" style="left:421.30px;top:314.00px;font-size:16px;line-height:16px;color:#000;">Impedance Spectroscopy</div>
<svg class="a" style="left:368px;top:339px;" width="10" height="16" viewBox="0 0 10 16"><path d="M2 2l6 6-6 6" fill="none" stroke="#999" stroke-width="2"/></svg>
<div class="a" style="left:384px;top:345px;width:5px;height:1px;background:repeating-linear-gradient(90deg,#888 0 1px,transparent 1px 2px);"></div>
<svg class="a" style="left:389px;top:335px;" width="26" height="22" viewBox="0 0 26 22"><path d="M1 3h6l2 2h9v4H5L1 17z" fill="#f8e8a0" stroke="#7a6a30" stroke-width="1"/><path d="M1 17l4-9h18l-4 9z" fill="#ffe070" stroke="#7a6a30" stroke-width="1"/><path d="M6 22V13h3v9h3v-9h3v9h3v-9h3v9" fill="none" stroke="#1a48c8" stroke-width="1.4"/></svg>
<div class="a t" style="left:421.30px;top:338.00px;font-size:16px;line-height:16px;color:#000;">Pulsed Techniques</div>
<svg class="a" style="left:368px;top:363px;" width="10" height="16" viewBox="0 0 10 16"><path d="M2 2l6 6-6 6" fill="none" stroke="#999" stroke-width="2"/></svg>
<div class="a" style="left:384px;top:369px;width:5px;height:1px;background:repeating-linear-gradient(90deg,#888 0 1px,transparent 1px 2px);"></div>
<svg class="a" style="left:389px;top:359px;" width="26" height="22" viewBox="0 0 26 22"><path d="M1 3h6l2 2h9v4H5L1 17z" fill="#f8e8a0" stroke="#7a6a30" stroke-width="1"/><path d="M1 17l4-9h18l-4 9z" fill="#ffe070" stroke="#7a6a30" stroke-width="1"/><rect x="3" y="6" width="16" height="6" fill="#ddd" stroke="#555"/><rect x="18" y="1" width="4" height="10" fill="#bbb" stroke="#444"/><rect x="7" y="15" width="5" height="7" fill="#2040d0"/><rect x="14" y="15" width="5" height="7" fill="#d02040"/></svg>
<div class="a t" style="left:421.30px;top:362.00px;font-size:16px;line-height:16px;color:#000;">Technique Builder</div>
<svg class="a" style="left:368px;top:387px;" width="10" height="16" viewBox="0 0 10 16"><path d="M2 2l6 6-6 6" fill="none" stroke="#999" stroke-width="2"/></svg>
<div class="a" style="left:384px;top:393px;width:5px;height:1px;background:repeating-linear-gradient(90deg,#888 0 1px,transparent 1px 2px);"></div>
<svg class="a" style="left:389px;top:383px;" width="26" height="22" viewBox="0 0 26 22"><path d="M1 3h6l2 2h9v4H5L1 17z" fill="#f8e8a0" stroke="#7a6a30" stroke-width="1"/><path d="M1 17l4-9h18l-4 9z" fill="#ffe070" stroke="#7a6a30" stroke-width="1"/><path d="M12 22v-6a5 5 0 0 1 10 0v6" fill="none" stroke="#222" stroke-width="1.6"/></svg>
<div class="a t" style="left:421.30px;top:386.00px;font-size:16px;line-height:16px;color:#000;">Manual Control</div>
<svg class="a" style="left:368px;top:411px;" width="10" height="16" viewBox="0 0 10 16"><path d="M2 2l6 6-6 6" fill="none" stroke="#999" stroke-width="2"/></svg>
<div class="a" style="left:384px;top:417px;width:5px;height:1px;background:repeating-linear-gradient(90deg,#888 0 1px,transparent 1px 2px);"></div>
<svg class="a" style="left:389px;top:407px;" width="26" height="22" viewBox="0 0 26 22"><path d="M1 3h6l2 2h9v4H5L1 17z" fill="#f8e8a0" stroke="#7a6a30" stroke-width="1"/><path d="M1 17l4-9h18l-4 9z" fill="#ffe070" stroke="#7a6a30" stroke-width="1"/><text x="11" y="22" font-family="Liberation Sans" font-size="11" fill="#000">iR</text></svg>
<div class="a t" style="left:421.30px;top:410.00px;font-size:16px;line-height:16px;color:#000;">Ohmic Drop Determination</div>
<svg class="a" style="left:365px;top:437px;" width="16" height="10" viewBox="0 0 16 10"><path d="M2 2l6 6 6-6" fill="none" stroke="#555" stroke-width="2"/></svg>
<div class="a" style="left:384px;top:441px;width:5px;height:1px;background:repeating-linear-gradient(90deg,#888 0 1px,transparent 1px 2px);"></div>
<svg class="a" style="left:389px;top:431px;" width="26" height="22" viewBox="0 0 26 22"><path d="M1 3h6l2 2h9v4H5L1 17z" fill="#f8e8a0" stroke="#7a6a30" stroke-width="1"/><path d="M1 17l4-9h18l-4 9z" fill="#ffe070" stroke="#7a6a30" stroke-width="1"/><path d="M12 3v12" stroke="#1a40c0" stroke-width="3"/><path d="M7 10l-4 4 4 3M17 10l4 4-4 3" fill="none" stroke="#000" stroke-width="1.4"/></svg>
<div class="a t" style="left:421.30px;top:434.00px;font-size:16px;line-height:16px;color:#000;">Bipotentiostat</div>
<div class="a" style="left:402px;top:453px;width:1px;height:67px;background:repeating-linear-gradient(#888 0 1px,transparent 1px 2px);"></div>
<div class="a" style="left:415px;top:453px;width:201px;height:24px;background:#d9d9d9;"></div>
<div class="a" style="left:403px;top:465px;width:15px;height:1px;background:repeating-linear-gradient(90deg,#888 0 1px,transparent 1px 2px);"></div>
<svg class="a" style="left:418px;top:452px;" width="24" height="24" viewBox="0 0 24 24"><path d="M11 1v13" stroke="#1a40c0" stroke-width="3"/><path d="M11 15v6" stroke="#20c0e0" stroke-width="2" stroke-dasharray="2 1"/><path d="M6 8l-4 5 4 4" fill="none" stroke="#000" stroke-width="1.3"/><path d="M14 12h6l-3-3v6z" fill="#000" stroke="#000" stroke-width="1.2"/></svg>
<div class="a t" style="left:449.50px;top:458.00px;font-size:16px;line-height:16px;color:#000;">Bipotentiostat Cyclic Voltammetry</div>
<div class="a" style="left:403px;top:489px;width:15px;height:1px;background:repeating-linear-gradient(90deg,#888 0 1px,transparent 1px 2px);"></div>
<svg class="a" style="left:418px;top:476px;" width="24" height="24" viewBox="0 0 24 24"><path d="M11 1v13" stroke="#1a40c0" stroke-width="3"/><path d="M11 15v6" stroke="#20c0e0" stroke-width="2" stroke-dasharray="2 1"/><path d="M6 8l-4 5 4 4" fill="none" stroke="#000" stroke-width="1.3"/><path d="M14 12h6l-3-3v6z" fill="#000" stroke="#000" stroke-width="1.2"/></svg>
<div class="a t" style="left:449.50px;top:482.00px;font-size:16px;line-height:16px;color:#000;">Bipotentiostat Chronopotentiometry</div>
<div class="a" style="left:403px;top:513px;width:15px;height:1px;background:repeating-linear-gradient(90deg,#888 0 1px,transparent 1px 2px);"></div>
<svg class="a" style="left:418px;top:500px;" width="24" height="24" viewBox="0 0 24 24"><path d="M11 1v13" stroke="#1a40c0" stroke-width="3"/><path d="M11 15v6" stroke="#20c0e0" stroke-width="2" stroke-dasharray="2 1"/><path d="M6 8l-4 5 4 4" fill="none" stroke="#000" stroke-width="1.3"/><path d="M14 12h6l-3-3v6z" fill="#000" stroke="#000" stroke-width="1.2"/></svg>
<div class="a t" style="left:449.50px;top:506.00px;font-size:16px;line-height:16px;color:#000;">Bipotentiostat Chronoamperometry</div>
<svg class="a" style="left:336px;top:530px;" width="16" height="10" viewBox="0 0 16 10"><path d="M2 2l6 6 6-6" fill="none" stroke="#555" stroke-width="2"/></svg>
<div class="a" style="left:352px;top:537px;width:8px;height:1px;background:repeating-linear-gradient(90deg,#888 0 1px,transparent 1px 2px);"></div>
<svg class="a" style="left:360px;top:527px;" width="26" height="22" viewBox="0 0 26 22"><path d="M1 3h6l2 2h9v4H5L1 17z" fill="#f8e8a0" stroke="#7a6a30" stroke-width="1"/><path d="M1 17l4-9h18l-4 9z" fill="#ffe070" stroke="#7a6a30" stroke-width="1"/></svg>
<div class="a t" style="left:393.30px;top:528.00px;font-size:18px;line-height:18px;color:#000;font-weight:bold;">Electrochemical Applications</div>
<div class="a" style="left:345px;top:548px;width:1px;height:0px;background:repeating-linear-gradient(#888 0 1px,transparent 1px 2px);"></div>
<svg class="a" style="left:368px;top:555px;" width="10" height="16" viewBox="0 0 10 16"><path d="M2 2l6 6-6 6" fill="none" stroke="#999" stroke-width="2"/></svg>
<div class="a" style="left:384px;top:561px;width:5px;height:1px;background:repeating-linear-gradient(90deg,#888 0 1px,transparent 1px 2px);"></div>
<svg class="a" style="left:389px;top:551px;" width="26" height="22" viewBox="0 0 26 22"><path d="M1 3h6l2 2h9v4H5L1 17z" fill="#f8e8a0" stroke="#7a6a30" stroke-width="1"/><path d="M1 17l4-9h18l-4 9z" fill="#ffe070" stroke="#7a6a30" stroke-width="1"/><rect x="9" y="4" width="14" height="18" rx="4" fill="#c8c8c8" stroke="#333" stroke-width="1.2"/><circle cx="16" cy="10" r="2.5" fill="#f02020"/></svg>
<div class="a t" style="left:421.30px;top:554.00px;font-size:16px;line-height:16px;color:#000;">Batteries Testing</div>
<svg class="a" style="left:368px;top:579px;" width="10" height="16" viewBox="0 0 10 16"><path d="M2 2l6 6-6 6" fill="none" stroke="#999" stroke-width="2"/></svg>
<div class="a" style="left:384px;top:585px;width:5px;height:1px;background:repeating-linear-gradient(90deg,#888 0 1px,transparent 1px 2px);"></div>
<svg class="a" style="left:389px;top:575px;" width="26" height="22" viewBox="0 0 26 22"><path d="M1 3h6l2 2h9v4H5L1 17z" fill="#f8e8a0" stroke="#7a6a30" stroke-width="1"/><path d="M1 17l4-9h18l-4 9z" fill="#ffe070" stroke="#7a6a30" stroke-width="1"/><rect x="13" y="9" width="4" height="13" fill="#333"/><rect x="19" y="9" width="4" height="13" fill="#333"/></svg>
<div class="a t" style="left:421.30px;top:578.00px;font-size:16px;line-height:16px;color:#000;">Supercapacitor</div>
<svg class="a" style="left:368px;top:603px;" width="10" height="16" viewBox="0 0 10 16"><path d="M2 2l6 6-6 6" fill="none" stroke="#999" stroke-width="2"/></svg>
<div class="a" style="left:384px;top:609px;width:5px;height:1px;background:repeating-linear-gradient(90deg,#888 0 1px,transparent 1px 2px);"></div>
<svg class="a" style="left:389px;top:599px;" width="26" height="22" viewBox="0 0 26 22"><path d="M1 3h6l2 2h9v4H5L1 17z" fill="#f8e8a0" stroke="#7a6a30" stroke-width="1"/><path d="M1 17l4-9h18l-4 9z" fill="#ffe070" stroke="#7a6a30" stroke-width="1"/><rect x="12" y="11" width="12" height="11" fill="#303878" stroke="#88a" stroke-width=".6"/></svg>
<div class="a t" style="left:421.30px;top:602.00px;font-size:16px;line-height:16px;color:#000;">Photovoltaic/Fuel Cells</div>
<svg class="a" style="left:368px;top:627px;" width="10" height="16" viewBox="0 0 10 16"><path d="M2 2l6 6-6 6" fill="none" stroke="#999" stroke-width="2"/></svg>
<div class="a" style="left:384px;top:633px;width:5px;height:1px;background:repeating-linear-gradient(90deg,#888 0 1px,transparent 1px 2px);"></div>
<svg class="a" style="left:389px;top:623px;" width="26" height="22" viewBox="0 0 26 22"><path d="M1 3h6l2 2h9v4H5L1 17z" fill="#f8e8a0" stroke="#7a6a30" stroke-width="1"/><path d="M1 17l4-9h18l-4 9z" fill="#ffe070" stroke="#7a6a30" stroke-width="1"/><ellipse cx="15" cy="18" rx="9" ry="5" fill="#e85010"/><circle cx="14" cy="18" r="2" fill="#fff"/></svg>
<div class="a t" style="left:421.30px;top:626.00px;font-size:16px;line-height:16px;color:#000;">Corrosion</div>
<svg class="a" style="left:368px;top:651px;" width="10" height="16" viewBox="0 0 10 16"><path d="M2 2l6 6-6 6" fill="none" stroke="#999" stroke-width="2"/></svg>
<div class="a" style="left:384px;top:657px;width:5px;height:1px;background:repeating-linear-gradient(90deg,#888 0 1px,transparent 1px 2px);"></div>
<svg class="a" style="left:389px;top:647px;" width="26" height="22" viewBox="0 0 26 22"><path d="M1 3h6l2 2h9v4H5L1 17z" fill="#f8e8a0" stroke="#7a6a30" stroke-width="1"/><path d="M1 17l4-9h18l-4 9z" fill="#ffe070" stroke="#7a6a30" stroke-width="1"/><circle cx="16" cy="12" r="4" fill="#d8a070" stroke="#744" stroke-width=".8"/><path d="M8 23c0-5 4-6 8-6s8 1 8 6z" fill="#5a9ad8"/></svg>
<div class="a t" style="left:421.30px;top:650.00px;font-size:16px;line-height:16px;color:#000;">Custom Applications</div>
<div class="a" style="left:325px;top:856px;width:157px;height:72px;border:1px solid #d4d4d4;border-bottom:none;"></div>
<div class="a" style="left:335px;top:850px;width:120px;height:12px;background:#e9edf8;"></div>
<div class="a t" style="left:337.50px;top:850.00px;font-size:16px;line-height:16px;color:#000;transform:scaleX(1.0246);transform-origin:0 0;">Insert Technique</div>
<svg class="a" style="left:349px;top:873px;" width="20" height="20" viewBox="0 0 20 20"><circle cx="10" cy="10" r="8.5" fill="#fff" stroke="#c8c8c8" stroke-width="1.2"/></svg>
<svg class="a" style="left:349px;top:897px;" width="20" height="20" viewBox="0 0 20 20"><circle cx="10" cy="10" r="8.5" fill="#fff" stroke="#c8c8c8" stroke-width="1.2"/><circle cx="10" cy="10" r="4.5" fill="#c4c4c4"/></svg>
<div class="a t" style="left:374.00px;top:877.00px;font-size:16px;line-height:16px;color:#a0a0a0;transform:scaleX(0.9758);transform-origin:0 0;">Before</div>
<div class="a t" style="left:374.00px;top:901.00px;font-size:16px;line-height:16px;color:#a0a0a0;transform:scaleX(1.0358);transform-origin:0 0;">After</div>
<div class="a" style="left:493.5px;top:856px;width:373px;height:72px;border:1px solid #d4d4d4;border-bottom:none;"></div>
<div class="a" style="left:503px;top:850px;width:115px;height:12px;background:#e9edf8;"></div>
<div class="a t" style="left:505.80px;top:850.00px;font-size:16px;line-height:16px;color:#000;">Load from default</div>
<svg class="a" style="left:505px;top:874px;" width="20" height="20" viewBox="0 0 20 20"><rect x="1" y="1" width="18" height="18" fill="#fff" stroke="#333" stroke-width="1.6"/><path d="M4 10l4 4 8-8" fill="none" stroke="#333" stroke-width="1.8"/></svg>
<svg class="a" style="left:505px;top:898px;" width="20" height="20" viewBox="0 0 20 20"><rect x="1" y="1" width="18" height="18" fill="#fff" stroke="#333" stroke-width="1.6"/><path d="M4 10l4 4 8-8" fill="none" stroke="#333" stroke-width="1.8"/></svg>
<div class="a t" style="left:529.20px;top:877.00px;font-size:16px;line-height:16px;color:#000;">Advanced settings</div>
<div class="a t" style="left:529.20px;top:901.00px;font-size:16px;line-height:16px;color:#000;transform:scaleX(0.9832);transform-origin:0 0;">Cell characteristics</div>
<div class="a" style="left:877.5px;top:856px;width:289px;height:72px;border:1px solid #d4d4d4;border-bottom:none;"></div>
<div class="a" style="left:1165.5px;top:856px;width:200px;height:72px;border-left:1px solid #d4d4d4;"></div>
<div class="a" style="left:892px;top:881px;width:82px;height:34px;background:#c4c4c4;border:1px solid #b8b8b8;"></div>
<div class="a t" style="left:902.76px;top:892.00px;font-size:16px;line-height:16px;color:#9a9a9a;">Rename</div>
<div class="a" style="left:977.75px;top:881px;width:80.25px;height:34px;background:#c4c4c4;border:1px solid #b8b8b8;"></div>
<div class="a t" style="left:1003.64px;top:892.00px;font-size:16px;line-height:16px;color:#9a9a9a;">Add</div>
<div class="a" style="left:1062px;top:881px;width:82px;height:34px;background:#c4c4c4;border:1px solid #b8b8b8;"></div>
<div class="a t" style="left:1073.21px;top:892.00px;font-size:16px;line-height:16px;color:#9a9a9a;">Remove</div>
<div class="a" style="left:1190.75px;top:883px;width:82px;height:35px;background:#e1e1e1;border:1px solid #adadad;"></div>
<div class="a t" style="left:1211.49px;top:894.00px;font-size:16px;line-height:16px;color:#000;">Stack</div>
<div class="a" style="left:1417px;top:884.5px;width:82px;height:33.5px;background:#e1e1e1;border:2px solid #0078d7;"></div>
<div class="a t" style="left:1446.44px;top:895.00px;font-size:16px;line-height:16px;color:#000;">OK</div>
<div class="a" style="left:1514.5px;top:884.5px;width:82px;height:33.5px;background:#e1e1e1;border:1px solid #adadad;"></div>
<div class="a t" style="left:1530.70px;top:895.00px;font-size:16px;line-height:16px;color:#000;">Cancel</div>
<div class="a" style="left:616px;top:239px;width:688px;height:659px;background:#e9edf8;border:1px solid #6a6a6a;box-shadow:0 4px 18px rgba(0,0,0,.32);"></div>
<div class="a" style="left:617px;top:240px;width:686px;height:38px;background:#fff;"></div>
<div class="a t" style="left:622.50px;top:249.00px;font-size:19.3px;line-height:19.3px;color:#000;transform:scaleX(1.0138);transform-origin:0 0;">Select the bipotentiostat ring and disk channels</div>
<svg class="a" style="left:1268px;top:248px;" width="20" height="20" viewBox="0 0 20 20"><path d="M2 2l16 16M18 2L2 18" stroke="#111" stroke-width="1.2"/></svg>
<div class="a t" style="left:634.20px;top:299.00px;font-size:16px;line-height:16px;color:#000;transform:scaleX(0.9795);transform-origin:0 0;">Channel 2 in</div>
<div class="a" style="left:735.8px;top:290.3px;width:145px;height:31px;background:#cccccc;"></div>
<div class="a t" style="left:742.50px;top:299.00px;font-size:16px;line-height:16px;color:#8a8a8a;transform:scaleX(0.9876);transform-origin:0 0;">bipotentiostat</div>
<svg class="a" style="left:860px;top:300px;" width="16" height="10" viewBox="0 0 16 10"><path d="M1 1l6 6 6-6" fill="none" stroke="#9a9a9a" stroke-width="1.3"/></svg>
<div class="a t" style="left:895.00px;top:299.00px;font-size:16px;line-height:16px;color:#000;transform:scaleX(0.9778);transform-origin:0 0;">mode with :</div>
<div class="a" style="left:643px;top:334px;width:661px;height:361px;background:#fff;border-top:2px solid #6a6a6a;border-left:2px solid #6a6a6a;border-bottom:2px solid #5a5a5a;"></div>
<div class="a" style="left:645px;top:336px;width:636px;height:25px;background:#efefef;"></div>
<div class="a" style="left:645px;top:361px;width:157px;height:28px;background:#efefef;"></div>
<div class="a t" style="left:646.70px;top:341.00px;font-size:16px;line-height:16px;color:#1a1a3a;transform:scaleX(0.9939);transform-origin:0 0;">Devices / Channels</div>
<div class="a t" style="left:646.70px;top:368.00px;font-size:16px;line-height:16px;color:#1a1a3a;transform:scaleX(0.9555);transform-origin:0 0;">VMP3 - virtual</div>
<div class="a t" style="left:804.00px;top:341.00px;font-size:16px;line-height:16px;color:#111;">1</div>
<div class="a" style="left:803px;top:365.3px;width:20px;height:19px;background:linear-gradient(135deg,#dcdcd8,#fafaf8);border:2px solid #3c6a9a;"></div>
<div class="a t" style="left:834.00px;top:341.00px;font-size:16px;line-height:16px;color:#111;">2</div>
<div class="a" style="left:831.5px;top:362px;width:30px;height:27px;background:#008080;"></div>
<div class="a" style="left:833px;top:365.3px;width:20px;height:19px;background:#fff;border:1px solid #c8c8c8;"></div>
<svg class="a" style="left:835px;top:367px;" width="16" height="14" viewBox="0 0 16 14"><path d="M3 7l4 4 7-8" fill="none" stroke="#c0c0c0" stroke-width="2.2"/></svg>
<div class="a t" style="left:864.00px;top:341.00px;font-size:16px;line-height:16px;color:#111;">3</div>
<div class="a" style="left:863px;top:365.3px;width:20px;height:19px;background:linear-gradient(135deg,#dcdcd8,#fafaf8);border:2px solid #3c6a9a;"></div>
<div class="a t" style="left:894.00px;top:341.00px;font-size:16px;line-height:16px;color:#111;">4</div>
<div class="a" style="left:893px;top:365.3px;width:20px;height:19px;background:linear-gradient(135deg,#dcdcd8,#fafaf8);border:2px solid #3c6a9a;"></div>
<div class="a t" style="left:924.00px;top:341.00px;font-size:16px;line-height:16px;color:#111;">5</div>
<div class="a" style="left:921.5px;top:362px;width:30px;height:27px;background:#008080;"></div>
<div class="a" style="left:923px;top:365.3px;width:20px;height:19px;background:linear-gradient(135deg,#dcdcd8,#fafaf8);border:2px solid #3c6a9a;"></div>
<svg class="a" style="left:925px;top:367px;" width="16" height="14" viewBox="0 0 16 14"><path d="M3 7l4 4 7-8" fill="none" stroke="#20a020" stroke-width="2.8"/></svg>
<div class="a t" style="left:954.00px;top:341.00px;font-size:16px;line-height:16px;color:#111;">6</div>
<div class="a" style="left:953px;top:365.3px;width:20px;height:19px;background:linear-gradient(135deg,#dcdcd8,#fafaf8);border:2px solid #3c6a9a;"></div>
<div class="a t" style="left:984.00px;top:341.00px;font-size:16px;line-height:16px;color:#111;">7</div>
<div class="a" style="left:983px;top:365.3px;width:20px;height:19px;background:linear-gradient(135deg,#dcdcd8,#fafaf8);border:2px solid #3c6a9a;"></div>
<div class="a t" style="left:1014.00px;top:341.00px;font-size:16px;line-height:16px;color:#111;">8</div>
<div class="a" style="left:1013px;top:365.3px;width:20px;height:19px;background:linear-gradient(135deg,#dcdcd8,#fafaf8);border:2px solid #3c6a9a;"></div>
<div class="a t" style="left:1044.00px;top:341.00px;font-size:16px;line-height:16px;color:#111;">9</div>
<div class="a" style="left:1043px;top:365.3px;width:20px;height:19px;background:linear-gradient(135deg,#dcdcd8,#fafaf8);border:2px solid #3c6a9a;"></div>
<div class="a t" style="left:1074.00px;top:341.00px;font-size:16px;line-height:16px;color:#111;">10</div>
<div class="a" style="left:1073px;top:365.3px;width:20px;height:19px;background:linear-gradient(135deg,#dcdcd8,#fafaf8);border:2px solid #3c6a9a;"></div>
<div class="a t" style="left:1104.00px;top:341.00px;font-size:16px;line-height:16px;color:#111;">11</div>
<div class="a" style="left:1103px;top:365.3px;width:20px;height:19px;background:linear-gradient(135deg,#dcdcd8,#fafaf8);border:2px solid #3c6a9a;"></div>
<div class="a t" style="left:1134.00px;top:341.00px;font-size:16px;line-height:16px;color:#111;">12</div>
<div class="a" style="left:1133px;top:365.3px;width:20px;height:19px;background:linear-gradient(135deg,#dcdcd8,#fafaf8);border:2px solid #3c6a9a;"></div>
<div class="a t" style="left:1164.00px;top:341.00px;font-size:16px;line-height:16px;color:#111;">13</div>
<div class="a" style="left:1163px;top:365.3px;width:20px;height:19px;background:linear-gradient(135deg,#dcdcd8,#fafaf8);border:2px solid #3c6a9a;"></div>
<div class="a t" style="left:1194.00px;top:341.00px;font-size:16px;line-height:16px;color:#111;">14</div>
<div class="a" style="left:1193px;top:365.3px;width:20px;height:19px;background:linear-gradient(135deg,#dcdcd8,#fafaf8);border:2px solid #3c6a9a;"></div>
<div class="a t" style="left:1224.00px;top:341.00px;font-size:16px;line-height:16px;color:#111;">15</div>
<div class="a" style="left:1223px;top:365.3px;width:20px;height:19px;background:linear-gradient(135deg,#dcdcd8,#fafaf8);border:2px solid #3c6a9a;"></div>
<div class="a t" style="left:1254.00px;top:341.00px;font-size:16px;line-height:16px;color:#111;">16</div>
<div class="a" style="left:1253px;top:365.3px;width:20px;height:19px;background:linear-gradient(135deg,#dcdcd8,#fafaf8);border:2px solid #3c6a9a;"></div>
<div class="a" style="left:642.7px;top:709px;width:19px;height:19px;background:#fff;border:2px solid #333;"></div>
<div class="a t" style="left:666.00px;top:712.00px;font-size:16px;line-height:16px;color:#111;transform:scaleX(0.9908);transform-origin:0 0;">Select all channels of VMP3 - virtual device</div>
<div class="a" style="left:642.7px;top:743.6px;width:19px;height:19px;background:#fff;border:2px solid #333;"></div>
<div class="a t" style="left:666.00px;top:746.00px;font-size:16px;line-height:16px;color:#111;transform:scaleX(0.9898);transform-origin:0 0;">Select all channels of all devices</div>
<div class="a t" style="left:642.30px;top:773.00px;font-size:16px;line-height:16px;color:#1c1c48;transform:scaleX(0.9607);transform-origin:0 0;">Disk channel</div>
<svg class="a" style="left:758px;top:774.5px;" width="12" height="18" viewBox="0 0 12 18"><path d="M11 0v17L0 8.5z" fill="#000080"/></svg>
<div class="a" style="left:782px;top:770.5px;width:53px;height:25px;background:#fff;border-top:2px solid #6a6a6a;border-left:2px solid #6a6a6a;border-right:1px solid #f4f4f4;border-bottom:1px solid #f4f4f4;"></div>
<div class="a t" style="left:786.00px;top:778.00px;font-size:16px;line-height:16px;color:#000;">2</div>
<svg class="a" style="left:849.5px;top:774.5px;" width="12" height="18" viewBox="0 0 12 18"><path d="M0 0v17L11 8.5z" fill="#000080"/></svg>
<div class="a t" style="left:642.30px;top:809.00px;font-size:16px;line-height:16px;color:#1c1c48;transform:scaleX(0.9743);transform-origin:0 0;">Ring channel</div>
<div class="a t" style="left:786.60px;top:809.00px;font-size:16px;line-height:16px;color:#1c1c48;">5</div>
<div class="a" style="left:882.75px;top:852px;width:82px;height:34px;background:#e1e1e1;border:1px solid #adadad;"></div>
<div class="a t" style="left:911.94px;top:862.00px;font-size:16px;line-height:16px;color:#111;">OK</div>
<div class="a" style="left:990.6px;top:853px;width:82px;height:34px;background:#e1e1e1;border:1px solid #adadad;"></div>
<div class="a t" style="left:1006.60px;top:863.00px;font-size:16px;line-height:16px;color:#111;">Cancel</div>
</body></html>
